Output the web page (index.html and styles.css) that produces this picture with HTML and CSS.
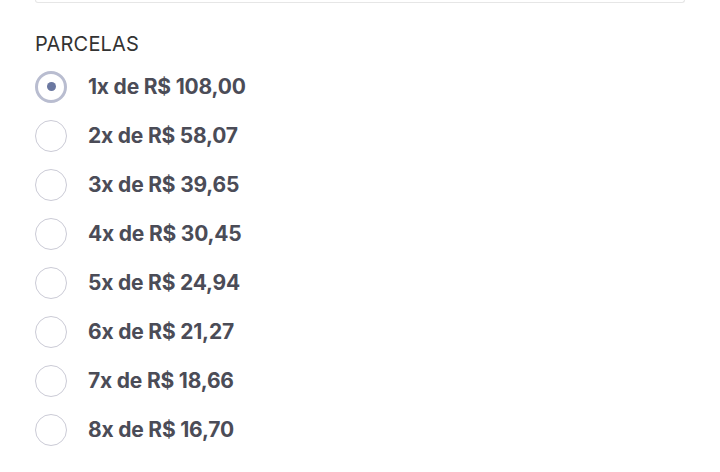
FILE: index.html
```html
<!DOCTYPE html>
<html lang="pt-BR">
<head>
  <meta charset="UTF-8" />
  <meta name="viewport" content="width=device-width, initial-scale=1.0"/>
  <title>Parcelas</title>
  <link rel="stylesheet" href="styles.css">
</head>
<body>
  <div class="container">
    <div class="field-end"></div>

    <div class="installments">
      <h3>PARCELAS</h3>
      <label class="option">
        <input type="radio" name="parcelas" value="1" checked>
        <span class="radio"></span>
        <span class="option-text">1x de R$ 108,00</span>
      </label>
      <label class="option">
        <input type="radio" name="parcelas" value="2">
        <span class="radio"></span>
        <span class="option-text">2x de R$ 58,07</span>
      </label>
      <label class="option">
        <input type="radio" name="parcelas" value="3">
        <span class="radio"></span>
        <span class="option-text">3x de R$ 39,65</span>
      </label>
      <label class="option">
        <input type="radio" name="parcelas" value="4">
        <span class="radio"></span>
        <span class="option-text">4x de R$ 30,45</span>
      </label>
      <label class="option">
        <input type="radio" name="parcelas" value="5">
        <span class="radio"></span>
        <span class="option-text">5x de R$ 24,94</span>
      </label>
      <label class="option">
        <input type="radio" name="parcelas" value="6">
        <span class="radio"></span>
        <span class="option-text">6x de R$ 21,27</span>
      </label>
      <label class="option">
        <input type="radio" name="parcelas" value="7">
        <span class="radio"></span>
        <span class="option-text">7x de R$ 18,66</span>
      </label>
      <label class="option">
        <input type="radio" name="parcelas" value="8">
        <span class="radio"></span>
        <span class="option-text">8x de R$ 16,70</span>
      </label>
    </div>
  </div>
</body>
</html>
```

FILE: styles.css
```css
:root {
  --text: #333333;
  --option-text: #4b4c57;
  --border: #e6e6e6;
  --radio-border: #cbcbd6;
  --radio-checked: #b9bdd0;
  --radio-dot: #6b78a1;
}

* {
  margin: 0;
  padding: 0;
  box-sizing: border-box;
}

html, body {
  height: 100%;
  overflow: hidden;
}

body {
  background: #ffffff;
  color: var(--text);
  font-family: Inter, "Open Sans", Arial, sans-serif;
}

.container {
  padding: 0 35px;
}

.field-end {
  height: 3px;
  border: 1px solid var(--border);
  border-top: none;
  border-radius: 0 0 6px 6px;
}

.installments h3 {
  font-size: 20px;
  font-weight: 400;
  line-height: 24px;
  margin-top: 29px;
  margin-bottom: 6px;
  letter-spacing: 0.2px;
}

.option {
  display: flex;
  align-items: center;
  gap: 21px;
  height: 49px;
  cursor: pointer;
}

.option input {
  display: none;
}

.radio {
  width: 32px;
  height: 32px;
  border: 1px solid var(--radio-border);
  border-radius: 50%;
  display: flex;
  align-items: center;
  justify-content: center;
  flex-shrink: 0;
}

.option input:checked + .radio {
  border: 3px solid var(--radio-checked);
}

.option input:checked + .radio::after {
  content: "";
  width: 9px;
  height: 9px;
  border-radius: 50%;
  background: var(--radio-dot);
}

.option-text {
  font-size: 21px;
  font-weight: 700;
  color: var(--option-text);
  letter-spacing: -0.2px;
}
```
